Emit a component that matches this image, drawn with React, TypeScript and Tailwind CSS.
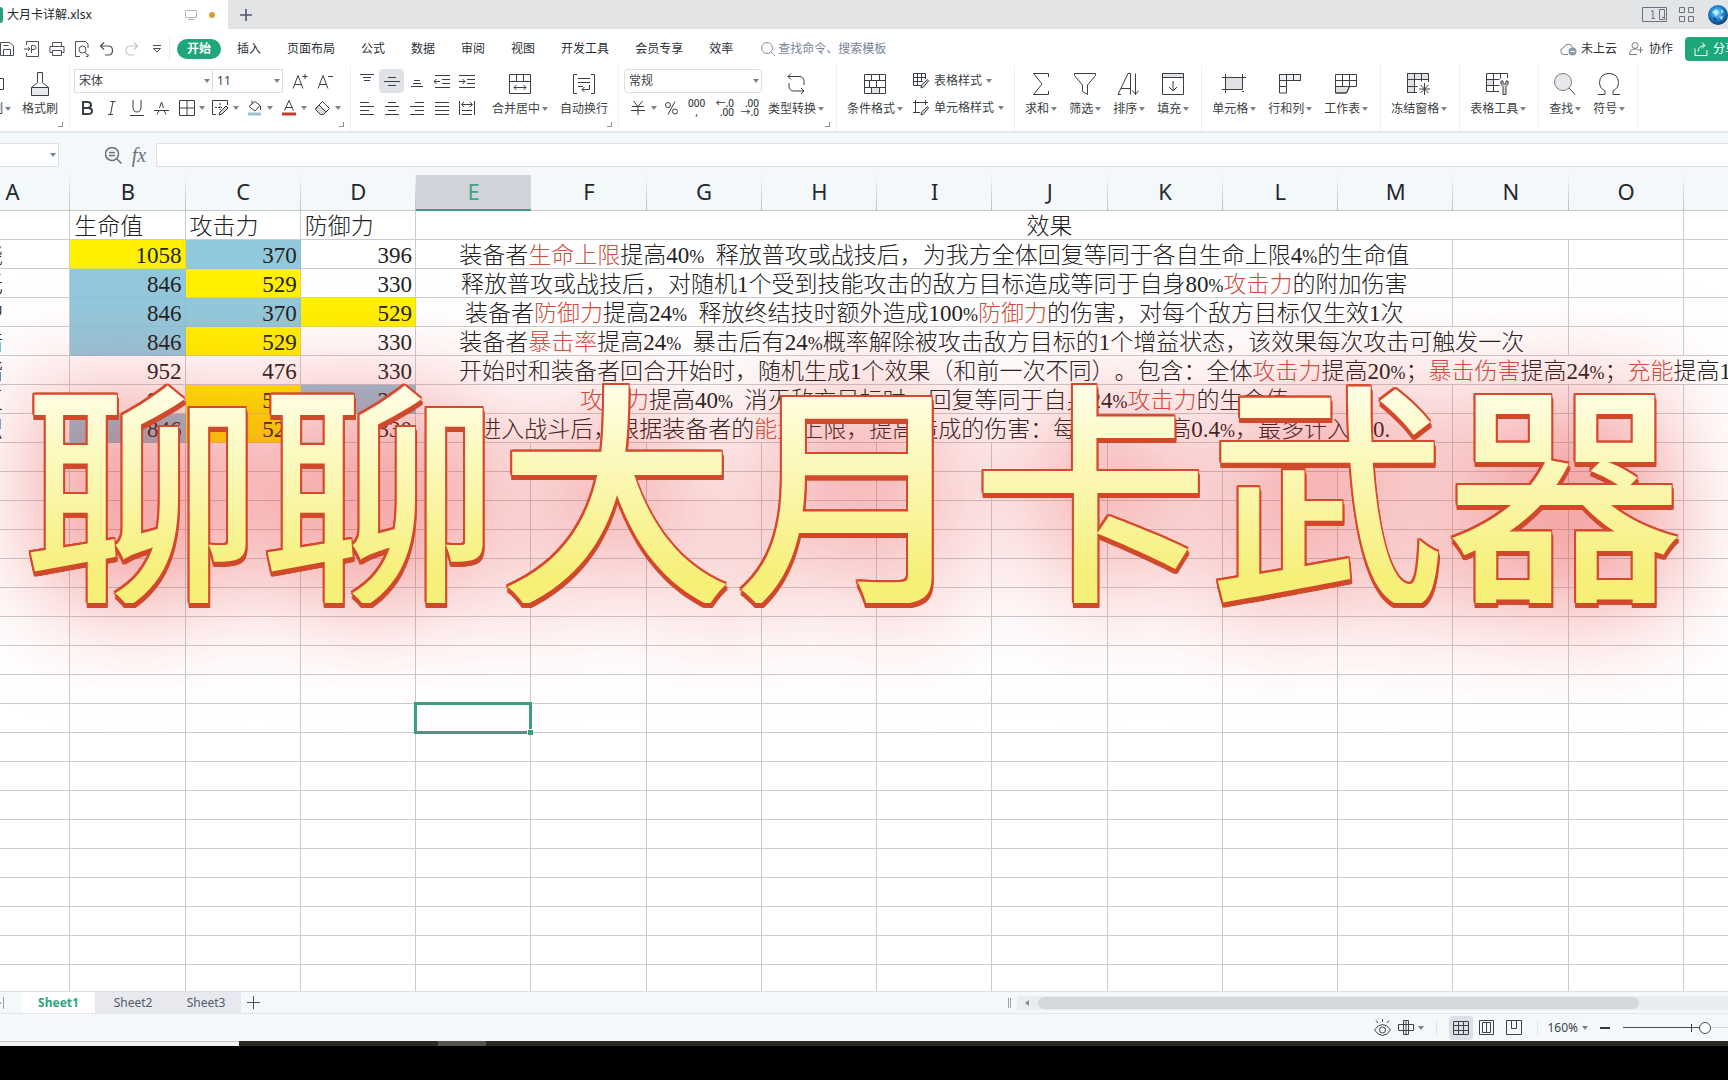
import React from "react";

type IconProps = { children: React.ReactNode; w?: number; h?: number; box?: string; className?: string };

function Icon({ children, w = 24, h = 24, box, className = "" }: IconProps) {
  return (
    <svg
      width={w}
      height={h}
      viewBox={box ?? `0 0 ${w} ${h}`}
      fill="none"
      stroke="currentColor"
      strokeWidth={1}
      className={`shrink-0 ${className}`}
      aria-hidden="true"
    >
      {children}
    </svg>
  );
}

function Caret() {
  return (
    <Icon w={6} h={4} className="text-[#7d828a]">
      <path d="M0 0H6L3 4Z" fill="currentColor" stroke="none" />
    </Icon>
  );
}

function Corner() {
  return (
    <span className="absolute right-[6px] bottom-1 size-[5px] border-r border-b border-[#8b8f94]" />
  );
}

function Group({ children, className = "" }: { children: React.ReactNode; className?: string }) {
  return <div className={`relative flex shrink-0 border-r border-[#eef0f1] ${className}`}>{children}</div>;
}

function Tall({ icon, label, caret = true, className = "" }: { icon: React.ReactNode; label: string; caret?: boolean; className?: string }) {
  return (
    <button type="button" className={`flex shrink-0 flex-col items-center gap-[5px] pt-[7px] ${className}`}>
      <span className="flex h-6 items-center">{icon}</span>
      <span className="flex h-4 items-center gap-[2px] leading-4 whitespace-nowrap">
        {label}
        {caret && <Caret />}
      </span>
    </button>
  );
}

function Tool({ label, children, active = false }: { label: string; children: React.ReactNode; active?: boolean }) {
  return (
    <button
      type="button"
      aria-label={label}
      className={`flex h-6 w-[25px] items-center justify-center ${active ? "rounded-sm bg-[#dfe3e7]" : ""}`}
    >
      {children}
    </button>
  );
}

function SplitTool({ label, children }: { label: string; children: React.ReactNode }) {
  return (
    <button type="button" aria-label={label} className="flex h-6 w-[34px] items-center">
      <span className="flex w-[25px] justify-center">{children}</span>
      <Caret />
    </button>
  );
}

function Picker({ label, value, className = "" }: { label: string; value: string; className?: string }) {
  return (
    <label className={`relative flex h-6 items-center border border-[#dcdfe2] bg-white ${className}`}>
      <select aria-label={label} className="w-full appearance-none bg-transparent pl-1 leading-5 outline-none">
        <option>{value}</option>
      </select>
      <span className="pointer-events-none absolute right-[2px]">
        <Caret />
      </span>
    </label>
  );
}

const lines = (rows: [number, number][], start = 2, step = 4) =>
  rows.map(([a, b], i) => `M${a} ${start + i * step + 0.5}H${b}`).join("");

const menuTabs = ["插入", "页面布局", "公式", "数据", "审阅", "视图", "开发工具", "会员专享", "效率"];

function TitleBar() {
  return (
    <header className="flex h-[29px] shrink-0 items-center bg-[#e3e4e6]">
      <div className="flex h-full w-[228px] items-center bg-white">
        <span className="h-4 w-[3px] rounded-r-sm bg-[#22a37a]" />
        <span className="ml-1 text-[#22262b]">大月卡详解.xlsx</span>
        <Icon w={12} h={12} className="mr-[12px] ml-auto text-[#b4b8bc]">
          <path d="M.5 1.5h11v7H.5zM6 8.500v2M3 10.500h6" />
        </Icon>
        <span className="mr-[13px] size-[6px] rounded-full bg-[#d99c2e]" />
      </div>
      <button type="button" aria-label="新建" className="ml-3 text-[#4d5674]">
        <Icon w={12} h={12}>
          <path d="M6 0v12M0 6h12" strokeWidth={1.600} />
        </Icon>
      </button>
      <div className="ml-auto flex items-center text-[#6a7183]">
        <Icon w={25} h={15} className="mr-3">
          <path d="M.5.5h24v14H.5zM17.500 2.500h5v10h-5zM20 10.500h2M9 4.500l2-1v8M9.500 11.500h3.500" />
        </Icon>
        <Icon w={15} h={15} className="mr-[14px]">
          <path d="M.5.5h5v5h-5zM9.500.5h5v5h-5zM.5 9.500h5v5h-5zM9.500 9.500h5v5h-5z" />
        </Icon>
        <svg width="20" height="20" viewBox="0 0 20 20" aria-hidden="true">
          <defs>
            <radialGradient id="gem" cx=".45" cy=".4" r=".65">
              <stop offset="0" stopColor="#8fd8f5" />
              <stop offset=".5" stopColor="#1d86d0" />
              <stop offset="1" stopColor="#0b2b66" />
            </radialGradient>
          </defs>
          <circle cx="10" cy="10" r="10" fill="url(#gem)" />
          <path d="M4 7l4-3 3 3-3 4zM11 12l4-1-1 4zM13 4l3 3-3 1z" fill="#c9f1ff" opacity=".8" />
          <path d="M5 12l3 1 1 4-3-2z" fill="#0c4f9e" />
        </svg>
      </div>
    </header>
  );
}

function QuickTools() {
  return (
    <div className="-ml-[6px] flex text-[#4a4f55]">
      <Tool label="保存">
        <Icon w={16} h={16}>
          <path d="M1.500 1.500h9.500l3.500 3.500v9.500h-13zM4.500 14.500v-6h7v6M4.500 4.500h5" />
        </Icon>
      </Tool>
      <Tool label="输出为PDF">
        <Icon w={16} h={16}>
          <path d="M2.500 4V.5h12v15h-12V12M0 8h6M4 6l2 2-2 2M7.500 12V4.500h2.500q2 0 2 2t-2 2H7.500" />
        </Icon>
      </Tool>
      <Tool label="打印">
        <Icon w={16} h={16}>
          <path d="M3.500 5V1.500h9V5M3.500 11.500h-2.500V5.500h14v6h-2.500M3.500 9.500h9v5h-9z" />
        </Icon>
      </Tool>
      <Tool label="打印预览">
        <Icon w={16} h={16}>
          <path d="M6 15.500H1.500V.5h10l2.500 2.500v4M14 13v2.500h-2" />
          <circle cx="8.500" cy="8.500" r="3.500" />
          <path d="M11 11.500l3 3" />
        </Icon>
      </Tool>
      <Tool label="撤销">
        <Icon w={16} h={16}>
          <path d="M5 1.500L1.500 5 5 8.500M1.500 5H9q4.500 0 4.500 4.500T9 14H6" strokeWidth={1.200} />
        </Icon>
      </Tool>
      <Tool label="恢复">
        <Icon w={16} h={16} className="text-[#c3c6c9]">
          <path d="M10 1.500L13.500 5 10 8.500M13.500 5H7q-5 0-5 4.500T7 14h3" strokeWidth={1.200} />
        </Icon>
      </Tool>
      <Tool label="更多">
        <Icon w={8} h={8}>
          <path d="M0 .5h8M.5 3.500L4 7l3.500-3.500z" />
        </Icon>
      </Tool>
    </div>
  );
}

function MenuBar() {
  return (
    <div className="flex h-9 shrink-0 items-center pt-1">
      <QuickTools />
      <span className="h-6 w-px shrink-0 bg-[#eceeef]" />
      <nav className="ml-[7px] flex shrink-0 items-center gap-[26px] text-[#2b3036]">
        <button type="button" className="-mr-[10px] h-5 rounded-full bg-[#1ea77b] px-[10px] leading-5 font-bold text-white">
          开始
        </button>
        {menuTabs.map((t) => (
          <button type="button" key={t} className="whitespace-nowrap">
            {t}
          </button>
        ))}
      </nav>
      <label className="ml-[28px] flex w-40 items-center gap-[3px] text-[#76839a]">
        <Icon w={14} h={14} className="text-[#8e949b]">
          <circle cx="6" cy="6" r="5.500" />
          <path d="M10 10l4 4" />
        </Icon>
        <input placeholder="查找命令、搜索模板" aria-label="查找命令、搜索模板" className="min-w-0 flex-1 bg-transparent outline-none placeholder:text-[#76839a] placeholder:opacity-100" />
      </label>
      <div className="ml-auto flex shrink-0 items-center text-[#2b3036]">
        <button type="button" className="flex items-center gap-1">
          <Icon w={17} h={14} className="text-[#777d84]">
            <path d="M8 12.500H4.500a3.500 3.500 0 0 1-.5-7 4.500 4.500 0 0 1 8.500-.5l1 1" />
            <circle cx="12.500" cy="9.500" r="4" fill="#8a9bb4" stroke="none" />
            <path d="M10.500 9.500h4" stroke="#fff" />
          </Icon>
          未上云
        </button>
        <button type="button" className="ml-3 flex items-center gap-[6px]">
          <Icon w={14} h={14} className="text-[#777d84]">
            <circle cx="6" cy="3.500" r="3" />
            <path d="M8 12.500H.500q0-5.500 5.500-5.500 1.500 0 2.500.5M11.500 5v6M9 8h5" />
          </Icon>
          协作
        </button>
        <button type="button" className="ml-3 flex h-6 w-[43px] items-center gap-[5px] overflow-hidden rounded-l bg-[#1ea77b] pl-[9px] whitespace-nowrap text-white">
          <Icon w={14} h={14}>
            <path d="M1 6.500v7h12V8M4 9.500Q4.500 4 10.500 3.500M8 .5l3 3-3 3" />
          </Icon>
          分享
        </button>
      </div>
    </div>
  );
}

function ClipboardGroup() {
  return (
    <Group className="gap-[11px] pr-[11px]">
      <Tall
        className="-ml-[21px]"
        label="复制"
        icon={
          <Icon w={18} h={18}>
            <path d="M6.500 3.500h11v11h-11zM3.500 14V.5H14" />
          </Icon>
        }
      />
      <Tall
        label="格式刷"
        caret={false}
        icon={
          <Icon w={20} h={24}>
            <path d="M1.500 15.500h17v8h-17z" fill="#e8e9eb" />
            <path d="M7.500.5h5v10l6 5h-17l6-5z" />
          </Icon>
        }
      />
      <Corner />
    </Group>
  );
}

function FontGroup() {
  return (
    <Group className="pr-[6px] pl-1">
      <div className="flex flex-col gap-[3px] pt-1">
        <div className="flex">
          <Picker label="字体" value="宋体" className="w-[139px]" />
          <Picker label="字号" value="11" className="mr-1 w-[70px] border-l-0" />
          <Tool label="增大字号">
            <Icon w={16} h={16}>
              <path d="M1 15.500L6 2.500l5 13M2.500 11.500h7M10.500 3.500h5M13 1v5" />
            </Icon>
          </Tool>
          <Tool label="减小字号">
            <Icon w={16} h={16}>
              <path d="M1 15.500L6 2.500l5 13M2.500 11.500h7M11 3.500h5" />
            </Icon>
          </Tool>
        </div>
        <div className="flex">
          <Tool label="加粗">
            <Icon w={12} h={14}>
              <path d="M2 1h4.500q3.500 0 3.500 3t-3.500 3H2zM2 7h5q4 0 4 3t-4 3H2z" strokeWidth={2} />
            </Icon>
          </Tool>
          <Tool label="倾斜">
            <Icon w={12} h={14}>
              <path d="M4.500.5h5M2 13.500h5M7 .5l-2.500 13" />
            </Icon>
          </Tool>
          <Tool label="下划线">
            <Icon w={16} h={16}>
              <path d="M4 0v7q0 5 4 5t4-5V0M1 15.500h14" />
            </Icon>
          </Tool>
          <Tool label="删除线">
            <Icon w={15} h={14}>
              <path d="M3 13.500l2-4M12 13.500l-2-4M5.500 7l2-6 2 6M0 9.500h15" />
            </Icon>
          </Tool>
          <SplitTool label="边框">
            <Icon w={16} h={16}>
              <path d="M.5.5h15v15H.5zM8 .5v15M.5 8h15" />
            </Icon>
          </SplitTool>
          <SplitTool label="绘图边框">
            <Icon w={17} h={16}>
              <path d="M4 14.500H.5V.5h15V5" />
              <path d="M3 7.500h7M8 3v7" strokeDasharray="2 1" />
              <path d="M14 6l2 2-6 6-3 1 1-3z" fill="#d5d8dc" />
            </Icon>
          </SplitTool>
          <SplitTool label="填充颜色">
            <Icon w={16} h={16}>
              <path d="M2 6.500L8 1.500l5 4-5 5.500zM13.500 6v4M5 .5v3" />
              <path d="M1 14h13" stroke="#9cc0d4" strokeWidth={3} />
            </Icon>
          </SplitTool>
          <SplitTool label="字体颜色">
            <Icon w={14} h={16}>
              <path d="M2.500 10.500l4.500-10 4.500 10M4 7.500h6" />
              <path d="M0 14h14" stroke="#c63a2b" strokeWidth={3} />
            </Icon>
          </SplitTool>
          <SplitTool label="清除">
            <Icon w={17} h={16}>
              <path d="M1.500 8.500l7-7 7 7-6 6h-3z" />
              <path d="M5 5l7 7-2.500 2.500h-3l-5-5z" fill="#d9dbde" />
            </Icon>
          </SplitTool>
        </div>
      </div>
      <Corner />
    </Group>
  );
}

function AlignGroup() {
  return (
    <Group className="pr-[10px] pl-[3px]">
      <div className="mr-[13px] flex flex-col gap-[3px] pt-1">
        <div className="flex">
          <Tool label="顶端对齐">
            <Icon w={14} h={16}>
              <path d={lines([[0, 14], [3, 11], [4, 10]], 1, 3)} />
            </Icon>
          </Tool>
          <Tool label="垂直居中" active>
            <Icon w={16} h={16}>
              <path d="M4 4.500h8M0 8.500h16M4 12.500h8" />
            </Icon>
          </Tool>
          <Tool label="底端对齐">
            <Icon w={12} h={16}>
              <path d={lines([[3, 9], [2, 10], [0, 12]], 7, 3)} />
            </Icon>
          </Tool>
          <Tool label="减少缩进">
            <Icon w={16} h={14}>
              <path d="M1 1.500h15M8 5.500h8M8 9.500h8M1 13.500h15M0 7.500h6M2.500 5L0 7.500 2.500 10" />
            </Icon>
          </Tool>
          <Tool label="增加缩进">
            <Icon w={16} h={14}>
              <path d="M0 1.500h16M8 5.500h8M8 9.500h8M0 13.500h16M0 7.500h6M3.500 5L6 7.500 3.500 10" />
            </Icon>
          </Tool>
        </div>
        <div className="flex">
          <Tool label="左对齐">
            <Icon w={14} h={14}>
              <path d={lines([[0, 9], [0, 14], [0, 9], [0, 14]], 1)} />
            </Icon>
          </Tool>
          <Tool label="水平居中">
            <Icon w={14} h={14}>
              <path d={lines([[3, 11], [0, 14], [3, 11], [0, 14]], 1)} />
            </Icon>
          </Tool>
          <Tool label="右对齐">
            <Icon w={14} h={14}>
              <path d={lines([[5, 14], [0, 14], [5, 14], [0, 14]], 1)} />
            </Icon>
          </Tool>
          <Tool label="两端对齐">
            <Icon w={14} h={14}>
              <path d={lines([[0, 14], [0, 14], [0, 14], [0, 14]], 1)} />
            </Icon>
          </Tool>
          <Tool label="分散对齐">
            <Icon w={16} h={14}>
              <path d="M.5 0v14M15.500 0v14M3 3.500h10M5 1L2.500 3.500 5 6M11 1l2.500 2.500L11 6M3 9.500h10M3 13.500h10" />
            </Icon>
          </Tool>
        </div>
      </div>
      <div className="flex gap-3">
        <Tall
          label="合并居中"
          icon={
            <Icon w={22} h={20}>
              <path d="M.5.500h21v19H.5zM.5 7.500h21M7.500.5v7M14.500.5v7M5 13.500h12M7.500 11L5 13.500 7.500 16M14.500 11l2.500 2.500-2.500 2.500" />
            </Icon>
          }
        />
        <Tall
          label="自动换行"
          caret={false}
          icon={
            <Icon w={22} h={20}>
              <path d="M4 .5H.5v19H4M18 .5h3.500v19H18M5 4.500h12M5 8.500h12M5 12.500h5M16.500 11v4.500H9M11.500 13L9 15.500l2.500 2.500" />
            </Icon>
          }
        />
      </div>
      <Corner />
    </Group>
  );
}

function NumberGroup() {
  return (
    <Group className="pr-3 pl-[5px]">
      <div className="mr-[6px] flex flex-col gap-[3px] pt-1">
        <Picker label="数字格式" value="常规" className="w-[138px] rounded-sm" />
        <div className="flex">
          <button type="button" aria-label="货币" className="flex h-6 w-[35px] items-center gap-[6px] pl-[7px]">
            <Icon w={14} h={14}>
              <path d="M2.500 0L7 5.500 11.500 0M1 5.500h12M0 9.500h14M7 5.500V14" />
            </Icon>
            <Caret />
          </button>
          <Tool label="百分比">
            <Icon w={13} h={14}>
              <circle cx="3" cy="4" r="2.500" />
              <circle cx="10" cy="10.500" r="2.500" />
              <path d="M10 .5L3 13.500" />
            </Icon>
          </Tool>
          <button type="button" aria-label="千位分隔" className="h-6 w-[25px] text-center text-[10px] leading-[9px] font-medium">
            000
            <br />,
          </button>
          <button type="button" aria-label="增加小数" className="h-6 w-[25px] text-right text-[10px] leading-[9px] font-medium">
            ←.0
            <br />
            .00
          </button>
          <button type="button" aria-label="减少小数" className="h-6 w-[25px] text-right text-[10px] leading-[9px] font-medium">
            .00
            <br />
            →.0
          </button>
        </div>
      </div>
      <Tall
        label="类型转换"
        icon={
          <Icon w={20} h={22}>
            <path d="M5 .5L2 3.500l3 3M2 3.500h11q5 0 5 5V12M15 15l3 3-3 3M18 18H8q-5 0-5-5V10" />
          </Icon>
        }
      />
      <Corner />
    </Group>
  );
}

function StyleGroup() {
  return (
    <Group className="pr-[10px] pl-[10px]">
      <Tall
        label="条件格式"
        icon={
          <Icon w={22} h={20}>
            <path d="M7.500 13.500h8v6h-8z" fill="#dfe1e4" />
            <path d="M.5.500h21v19H.5zM.5 6.500h21M.5 13.500h21M7.500.5v6M12.500 6.500v7M7.500 13.500v6M15.500.5v6M15.500 13.500v6M5.500 6.500v7" />
          </Icon>
        }
      />
      <div className="ml-[10px] flex flex-col gap-[3px] pt-1">
        <button type="button" className="flex h-6 items-center whitespace-nowrap">
          <Icon w={16} h={16}>
            <path d="M8 12.500H.5V.5h12V6M.5 4.500h12M.5 8.500h9M4.500.5v12M8.500.5v8" />
            <path d="M14.500 6.500l1 1.500-5 6-2.500 1 .5-3z" fill="#d5d8dc" />
          </Icon>
          <span className="mr-1 ml-[5px]">表格样式</span>
          <Caret />
        </button>
        <button type="button" className="flex h-6 items-center whitespace-nowrap">
          <Icon w={16} h={16}>
            <path d="M2.500 0v13M0 2.500h15M12.500 0v5M0 12.500h7" />
            <path d="M14.500 6.500l1 1.500-5 6-2.500 1 .5-3z" fill="#d5d8dc" />
          </Icon>
          <span className="mr-1 ml-[5px]">单元格样式</span>
          <Caret />
        </button>
      </div>
    </Group>
  );
}

const tailGroups: { label: string; icon: React.ReactNode }[][] = [
  [
    {
      label: "求和",
      icon: (
        <Icon w={18} h={22}>
          <path d="M16.500 4V.5H1.500L10 11 1.500 21.500h15V18" />
        </Icon>
      ),
    },
    {
      label: "筛选",
      icon: (
        <Icon w={22} h={22}>
          <path d="M.5.5h21v2L13.500 12v9.500l-5-3V12L.5 2.500z" />
        </Icon>
      ),
    },
    {
      label: "排序",
      icon: (
        <Icon w={24} h={22}>
          <path d="M1 21.500L11 .5h2.500v21M4 15.500h9.500M1 21.500h3M18.500.500v21M15.500 17.500l3 4 3-4" />
        </Icon>
      ),
    },
    {
      label: "填充",
      icon: (
        <Icon w={22} h={22}>
          <path d="M.5.5h21v4H.5z" fill="#dfe1e4" />
          <path d="M.5.5h21v21H.5zM.500 4.500h21M11 8v10M7 14l4 4 4-4" />
        </Icon>
      ),
    },
  ],
  [
    {
      label: "单元格",
      icon: (
        <Icon w={24} h={20}>
          <path d="M3.500 3.500h17v12h-17z" fill="#dfe1e4" />
          <path d="M3.500 0v19M20.500 0v14M0 3.500h24M0 15.500h18M20 17.500h2" />
        </Icon>
      ),
    },
    {
      label: "行和列",
      icon: (
        <Icon w={22} h={20}>
          <path d="M.5.5h21v6H.5z" fill="#eceef0" />
          <path d="M7.500 6.500v12.500h-7V.5h21v6H.5M7.500.5v6M14.500.5v6M.5 12.500h7" />
        </Icon>
      ),
    },
    {
      label: "工作表",
      icon: (
        <Icon w={22} h={20}>
          <path d="M.5 12.500h14l-3 6.500H.5z" fill="#dfe1e4" />
          <path d="M.5.5h21v12H.5zM.500 6.500h21M7.500.5v12M14.500.5v12M.5 12.500v6.500h11l3-6.500" />
        </Icon>
      ),
    },
  ],
  [
    {
      label: "冻结窗格",
      icon: (
        <Icon w={24} h={22}>
          <path d="M.5.5h21v6H7.500v13h-7z" fill="#dfe1e4" />
          <path d="M10 19.500H.5V.5h21V9M.5 6.500h21M.5 13.500h10M7.500.5v19M14.500.5v8M17.500 10v12M12 16h11M13.500 12l8 8M21.500 12l-8 8" />
        </Icon>
      ),
    },
  ],
  [
    {
      label: "表格工具",
      icon: (
        <Icon w={24} h={22}>
          <path d="M.5 6.500h7v6h-7z" fill="#dfe1e4" />
          <path d="M13 18.500H.5V.5h21V5M.5 6.500h13M.5 12.500h13M7.500.5v18M14.500.5v5" />
          <path d="M17 21.500v-8q-3-2-2-5.500l2 0v3h3v-3h2q1 3.500-2 5.500v8z" fill="#d5d8dc" />
        </Icon>
      ),
    },
  ],
  [
    {
      label: "查找",
      icon: (
        <Icon w={24} h={22}>
          <circle cx="10" cy="9" r="8.500" fill="#e6e7e9" stroke="#777c82" />
          <path d="M16 15l6 6.500" />
        </Icon>
      ),
    },
    {
      label: "符号",
      icon: (
        <Icon w={22} h={22}>
          <path d="M0 21.500h7V18Q1.500 15 1.500 9.500 2 .5 11 .5t9.500 9Q20.500 15 15 18v3.500h7" />
        </Icon>
      ),
    },
  ],
];

function Ribbon() {
  return (
    <div className="flex h-[66px] shrink-0 overflow-hidden text-[#3a3f45]">
      <ClipboardGroup />
      <FontGroup />
      <AlignGroup />
      <NumberGroup />
      <StyleGroup />
      {tailGroups.map((g) => (
        <Group key={g[0].label} className="gap-3 pr-3 pl-[10px]">
          {g.map((b) => (
            <Tall key={b.label} label={b.label} icon={b.icon} />
          ))}
        </Group>
      ))}
    </div>
  );
}

function FormulaBar() {
  return (
    <div className="flex h-11 shrink-0 items-center border-t-2 border-[#e4e8ea] bg-[#f3f8fa] pt-[5px] pb-[3px] text-[#6b7178]">
      <div className="flex h-6 w-[59px] items-center justify-end border border-l-0 border-[#dde1e4] bg-white pr-[2px]">
        <Caret />
      </div>
      <Icon w={17} h={17} className="ml-[46px]">
        <circle cx="7" cy="7" r="6.500" strokeWidth={1.500} />
        <path d="M4 5.500h6M4 8.500h6M12 12l4.500 4.500" strokeWidth={1.500} />
      </Icon>
      <span className="w-[34px] text-center font-['Liberation_Serif',serif] text-[20px] leading-6 italic">fx</span>
      <input aria-label="编辑栏" className="h-6 min-w-0 flex-1 border border-r-0 border-[#dde1e4] bg-white outline-none" />
    </div>
  );
}

const columns = ["A", "B", "C", "D", "E", "F", "G", "H", "I", "J", "K", "L", "M", "N", "O", "P"];

type Fill = "y" | "b" | "";
type Row = { name: string; stats: [number, Fill][]; span: number; text: string };

// Text between asterisks is set in red.
const rows: Row[] = [
  { name: "丰饶", stats: [[1058, "y"], [370, "b"], [396, ""]], span: 9, text: "装备者*生命上限*提高40% 释放普攻或战技后，为我方全体回复等同于各自生命上限4%的生命值" },
  { name: "虚无", stats: [[846, "b"], [529, "y"], [330, ""]], span: 9, text: "释放普攻或战技后，对随机1个受到技能攻击的敌方目标造成等同于自身80%*攻击力*的附加伤害" },
  { name: "存护", stats: [[846, "b"], [370, "b"], [529, "y"]], span: 9, text: "装备者*防御力*提高24% 释放终结技时额外造成100%*防御力*的伤害，对每个敌方目标仅生效1次" },
  { name: "巡猎", stats: [[846, "b"], [529, "y"], [330, ""]], span: 10, text: "装备者*暴击率*提高24% 暴击后有24%概率解除被攻击敌方目标的1个增益状态，该效果每次攻击可触发一次" },
  { name: "同谐", stats: [[952, ""], [476, ""], [330, ""]], span: 12, text: "开始时和装备者回合开始时，随机生成1个效果（和前一次不同）。包含：全体*攻击力*提高20%；*暴击伤害*提高24%；*充能*提高16%" },
  { name: "毁灭", stats: [[952, ""], [529, "y"], [264, "b"]], span: 9, text: "*攻击力*提高40% 消灭敌方目标时，回复等同于自身24%*攻击力*的生命值" },
  { name: "智识", stats: [[846, "b"], [529, "y"], [330, ""]], span: 9, text: "进入战斗后，根据装备者的*能量*上限，提高造成的伤害：每点能量提高0.4%，最多计入160." },
];

const fills: Record<Fill, string> = { y: "bg-[#fff100] border-[#e6d94a]", b: "bg-[#92c8dc] border-[#8fc0d2]", "": "border-[#cbcccd]" };
const cell = "h-[29px] border-r border-b p-0";

function Effect({ text }: { text: string }) {
  return (
    <>
      {text.split("*").map((part, i) => (
        <span key={i} className={i % 2 ? "text-[#cf4f40]" : ""}>
          {part.split(/([% ])/).map((s, j) =>
            s === "%" ? (
              <span key={j} className="text-[18px]">%</span>
            ) : s === " " ? (
              "\u00a0\u00a0"
            ) : (
              s
            ),
          )}
        </span>
      ))}
    </>
  );
}

function Blank({ from, to = 16 }: { from: number; to?: number }) {
  return (
    <>
      {columns.slice(from, to).map((c) => (
        <td key={c} className={`${cell} border-[#cbcccd]`} />
      ))}
    </>
  );
}

function Sheet() {
  return (
    <div className="min-h-0 flex-1 overflow-hidden bg-white">
      <table className="-ml-[45px] w-[calc(100%+116px)] table-fixed border-separate border-spacing-0 font-['Liberation_Serif','Noto_Sans_CJK_SC',serif] text-[23px] leading-[28px] font-light text-[#222] [text-spacing-trim:space-all]">
        <thead>
          <tr className="bg-[#f3f8fa] font-['Noto_Sans',sans-serif] text-[22px] text-[#24282c]">
            {columns.map((c) => (
              <th
                key={c}
                scope="col"
                className={
                  c === "E"
                    ? "h-9 border-b-2 border-[#3f9f84] bg-[#d2d4dc] p-0 pb-[2px] font-normal text-[#3ba682]"
                    : "h-9 border-b border-[#c4c8ca] bg-[linear-gradient(to_bottom,transparent,#b9bdc6)] bg-[length:1px_100%] bg-right bg-no-repeat p-0 pb-[3px] font-normal"
                }
              >
                {c}
              </th>
            ))}
          </tr>
        </thead>
        <tbody>
          <tr>
            <Blank from={0} to={1} />
            {["生命值", "攻击力", "防御力"].map((h) => (
              <td key={h} className={`${cell} border-[#cbcccd]`}>
                <span className="block h-7 pl-1 leading-8">{h}</span>
              </td>
            ))}
            <td colSpan={11} className={`${cell} border-[#cbcccd] text-center`}>
              <span className="block h-7 leading-8">效果</span>
            </td>
            <Blank from={15} />
          </tr>
          {rows.map((r) => (
            <tr key={r.name}>
              <td className={`${cell} border-[#cbcccd]`}>
                <span className="block h-7 pl-[2px] leading-8">{r.name}</span>
              </td>
              {r.stats.map(([n, f], i) => (
                <td key={i} className={`${cell} ${fills[f]} text-right`}>
                  <span className="block h-7 pr-[3px] leading-8">{n}</span>
                </td>
              ))}
              <td colSpan={r.span} className={`${cell} border-[#cbcccd] whitespace-nowrap ${r.span === 12 ? "overflow-hidden pl-[43px]" : "text-center"}`}>
                <span className="block h-7 leading-8">
                  <Effect text={r.text} />
                </span>
              </td>
              <Blank from={4 + r.span} />
            </tr>
          ))}
          {Array.from({ length: 19 }, (_, i) => (
            <tr key={i}>
              {i === 9 ? (
                <>
                  <Blank from={0} to={4} />
                  <td className={`${cell} relative border-[#cbcccd]`}>
                    <span className="absolute -inset-x-[2px] -inset-y-[2px] border-[3px] border-[#3a9f82]" />
                    <span className="absolute -right-[3px] -bottom-[3px] size-[6px] border-t border-l border-white bg-[#3a9f82]" />
                  </td>
                  <Blank from={5} />
                </>
              ) : (
                <Blank from={0} />
              )}
            </tr>
          ))}
        </tbody>
      </table>
    </div>
  );
}

function SheetTabs() {
  return (
    <div className="flex h-[22px] shrink-0 items-center border-t border-[#dcdfe2] bg-[#f3f8fa] text-[#515a6c]">
      <Icon w={22} h={12} className="text-[#9aa0a8]">
        <path d="M-2 3l3 3-3 3M3.500 0v12" />
      </Icon>
      <button type="button" className="h-full w-[73px] bg-white font-bold text-[#2fa57c]">Sheet1</button>
      <button type="button" className="h-full w-[76px] bg-[#e7e9ee]">Sheet2</button>
      <button type="button" className="h-full w-[70px] bg-[#e7e9ee]">Sheet3</button>
      <button type="button" aria-label="新建工作表" className="ml-[6px] text-[#4b5260]">
        <Icon w={13} h={13}>
          <path d="M6.500 0v13M0 6.500h13" />
        </Icon>
      </button>
      <div className="ml-auto flex w-5/12 items-center">
        <span className="h-[10px] w-[3px] border-x border-[#9da2a8]" />
        <div className="ml-[6px] flex h-[14px] flex-1 items-center bg-[#e9edef]">
          <Icon w={4} h={6} className="ml-[8px] text-[#868b91]">
            <path d="M4 0v6L0 3z" fill="currentColor" stroke="none" />
          </Icon>
          <span className="ml-[9px] h-3 w-[601px] rounded-full bg-[#d4d8dc]" />
        </div>
      </div>
    </div>
  );
}

function StatusBar() {
  return (
    <footer className="flex h-7 shrink-0 items-center justify-end overflow-hidden border-t border-[#e2e6e8] bg-[#f3f8fa] text-[#3d4248]">
      <button type="button" aria-label="护眼模式">
        <Icon w={17} h={17}>
          <path d="M.5 11Q4 5.500 8.500 5.500T16.500 11Q13 16.500 8.500 16.500T.5 11zM8.500 0v3M2 1.500l2 2.500M15 1.500L13 4" />
          <circle cx="8.500" cy="11" r="3" />
        </Icon>
      </button>
      <button type="button" aria-label="阅读模式" className="ml-[7px] flex items-center gap-1">
        <Icon w={16} h={15}>
          <path d="M5.500.5h5v14h-5zM.5 4.500h15v6H.5zM8 .5v14" />
        </Icon>
        <Caret />
      </button>
      <span className="ml-3 h-4 w-px bg-[#e0e3e6]" />
      <button type="button" aria-label="普通视图" className="ml-3 flex h-6 w-6 items-center justify-center rounded-sm bg-[#dbdfe7]">
        <Icon w={16} h={14}>
          <path d="M.5.5h15v13H.5zM.5 4.500h15M.5 9.500h15M5.500.5v13M10.500.5v13" />
        </Icon>
      </button>
      <button type="button" aria-label="分页预览" className="ml-[6px]">
        <Icon w={15} h={15}>
          <path d="M.5.5h14v14H.5zM3.500 2.500h8v10h-8zM7.500 2.500v10" />
        </Icon>
      </button>
      <button type="button" aria-label="页面布局视图" className="ml-3">
        <Icon w={16} h={15}>
          <path d="M.5.5h15v14H.5zM5.500.5v8h5V.5" />
        </Icon>
      </button>
      <span className="ml-[15px] h-4 w-px bg-[#e6e9eb]" />
      <button type="button" className="ml-[9px] flex items-center gap-1">
        160% <Caret />
      </button>
      <button type="button" aria-label="缩小" className="mr-[13px] ml-3 h-[2px] w-[10px] bg-[#34383d]" />
      <div className="relative w-[105px] overflow-hidden">
        <span className="absolute top-1/2 left-[68px] h-2 w-px -translate-y-1/2 bg-[#444]" />
        <input
          type="range"
          aria-label="缩放比例"
          min={0}
          max={100}
          defaultValue={61}
          className="block h-5 w-[136px] appearance-none bg-[linear-gradient(to_right,#4a4e53_58%,#cfd3d6_58%)] bg-[length:100%_1px] bg-center bg-no-repeat [&::-webkit-slider-thumb]:size-3 [&::-webkit-slider-thumb]:appearance-none [&::-webkit-slider-thumb]:rounded-full [&::-webkit-slider-thumb]:border [&::-webkit-slider-thumb]:border-[#4a4e53] [&::-webkit-slider-thumb]:bg-white"
        />
      </div>
    </footer>
  );
}

export default function App() {
  return (
    <div className="relative flex h-screen flex-col overflow-hidden bg-white font-['Noto_Sans','Noto_Sans_CJK_SC',sans-serif] text-[12px] leading-4">
      <TitleBar />
      <MenuBar />
      <Ribbon />
      <FormulaBar />
      <Sheet />
      <SheetTabs />
      <StatusBar />
      <div className="flex h-[5px] shrink-0 bg-[#2b2a22]">
        <span className="w-[239px] border-t border-[#c4c6c4] bg-[#f1f1ef]" />
        <span className="ml-[199px] w-12 bg-[#55544c]" />
      </div>
      <div className="h-[34px] shrink-0 bg-black" />
      <h1 className="pointer-events-none absolute top-[363px] left-6 bg-[linear-gradient(to_bottom,#fffee6_10%,#f6ef78_90%)] bg-clip-text font-['Noto_Sans_CJK_SC',sans-serif] text-[237px] leading-[240px] font-medium whitespace-nowrap text-transparent [filter:drop-shadow(1px_0_0_#d6492c)_drop-shadow(-2px_0_0_#d6492c)_drop-shadow(0_-2px_0_#d6492c)_drop-shadow(1px_5px_0_#d0492b)_drop-shadow(0_4px_52px_rgba(230,50,50,0.62))]">
        聊聊大月卡武器
      </h1>
    </div>
  );
}
